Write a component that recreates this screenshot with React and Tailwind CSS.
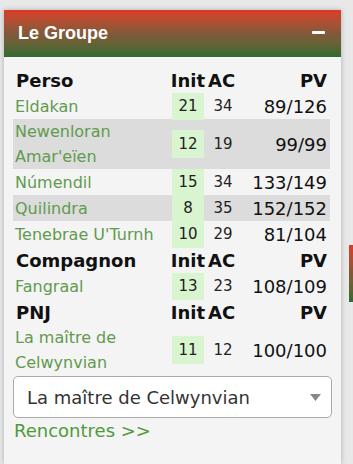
const perso = [
  { name: ['Eldakan'], init: 21, ac: 34, pv: '89/126' },
  { name: ['Newenloran', "Amar'eïen"], init: 12, ac: 19, pv: '99/99', alt: true },
  { name: ['Númendil'], init: 15, ac: 34, pv: '133/149' },
  { name: ['Quilindra'], init: 8, ac: 35, pv: '152/152', alt: true },
  { name: ["Tenebrae U'Turnh"], init: 10, ac: 29, pv: '81/104' },
];

const compagnons = [{ name: ['Fangraal'], init: 13, ac: 23, pv: '108/109' }];

const pnj = [{ name: ['La maître de', 'Celwynvian'], init: 11, ac: 12, pv: '100/100' }];

const cols = 'grid grid-cols-[159px_32px_38px_1fr]';

function HeadRow({ label }) {
  return (
    <div className={`${cols} h-[26px] items-center text-[18px] font-bold text-[#111]`}>
      <span className="pl-[3px] leading-[26px]">{label}</span>
      <span className="text-center whitespace-nowrap -mx-[2px]">Init</span>
      <span className="pl-[4px]">AC</span>
      <span className="text-right pr-[3px]">PV</span>
    </div>
  );
}

function Row({ r }) {
  const two = r.name.length > 1;
  return (
    <div className={`${cols} ${two ? 'h-[50px]' : 'h-[26px]'} ${r.alt ? 'bg-[#dcdcdc]' : ''}`}>
      <div className="pl-[2px] flex flex-col justify-center text-[16px] leading-[25px] text-[#629a4f]">
        {r.name.map((n) => (
          <span key={n}>{n}</span>
        ))}
      </div>
      <div className="flex items-center">
        <div className={`w-full ${two ? 'h-[28px]' : 'h-full'} bg-[#d8f5cf] flex items-center justify-center text-[15px] text-[#222]`}>
          {r.init}
        </div>
      </div>
      <div className="flex items-center justify-center text-[15px] text-[#222]">{r.ac}</div>
      <div className="flex items-center justify-end pr-[3px] text-[18px] text-[#111]">{r.pv}</div>
    </div>
  );
}

export default function App() {
  return (
    <div className="w-[353px] h-[464px] overflow-hidden bg-[#e8e8e8] flex" style={{ fontFamily: '"DejaVu Sans", Verdana, sans-serif' }}>
      <div className="pl-[4px] pt-[10px] shrink-0">
        <div className="w-[337px] h-[454px] bg-[#f4f4f4] shadow-[0_0_5px_rgba(0,0,0,0.25)]">
          {/* header */}
          <div className="h-[47px] flex items-center justify-between pl-[14px] pr-[16px] bg-gradient-to-b from-[#da3b26] via-[#82583a] to-[#2e6b30]">
            <span className="text-white text-[18px] font-bold" style={{ fontFamily: '"Liberation Sans", Arial, sans-serif' }}>
              Le Groupe
            </span>
            <span className="block w-[13px] h-[3px] rounded-[1px] bg-white mb-[2px]"></span>
          </div>

          {/* body */}
          <div className="pl-[9px] pr-[11px] pt-[10px]">
            <HeadRow label="Perso" />
            {perso.map((r) => (
              <Row key={r.name[0]} r={r} />
            ))}
            <HeadRow label="Compagnon" />
            {compagnons.map((r) => (
              <Row key={r.name[0]} r={r} />
            ))}
            <HeadRow label="PNJ" />
            {pnj.map((r) => (
              <Row key={r.name[0]} r={r} />
            ))}

            <div className="mt-px h-[42px] w-[319px] bg-white border border-[#aaa] rounded-[5px] flex items-center justify-between pl-[13px] pr-[10px]">
              <span className="text-[18px] text-[#333]">La maître de Celwynvian</span>
              <svg width="11" height="7" viewBox="0 0 11 7">
                <path d="M0 0h11L5.5 7z" fill="#888" />
              </svg>
            </div>

            <div className="text-[18px] leading-[24px] text-[#4f9a3a] mt-[1px] pl-px">Rencontres &gt;&gt;</div>
          </div>
        </div>
      </div>

      {/* main column peeking at right */}
      <div className="pl-[8px] pt-[245px] shrink-0">
        <div className="w-[60px] h-[57px] bg-gradient-to-b from-[#da3b26] via-[#82583a] to-[#2e6b30]"></div>
      </div>
    </div>
  );
}
